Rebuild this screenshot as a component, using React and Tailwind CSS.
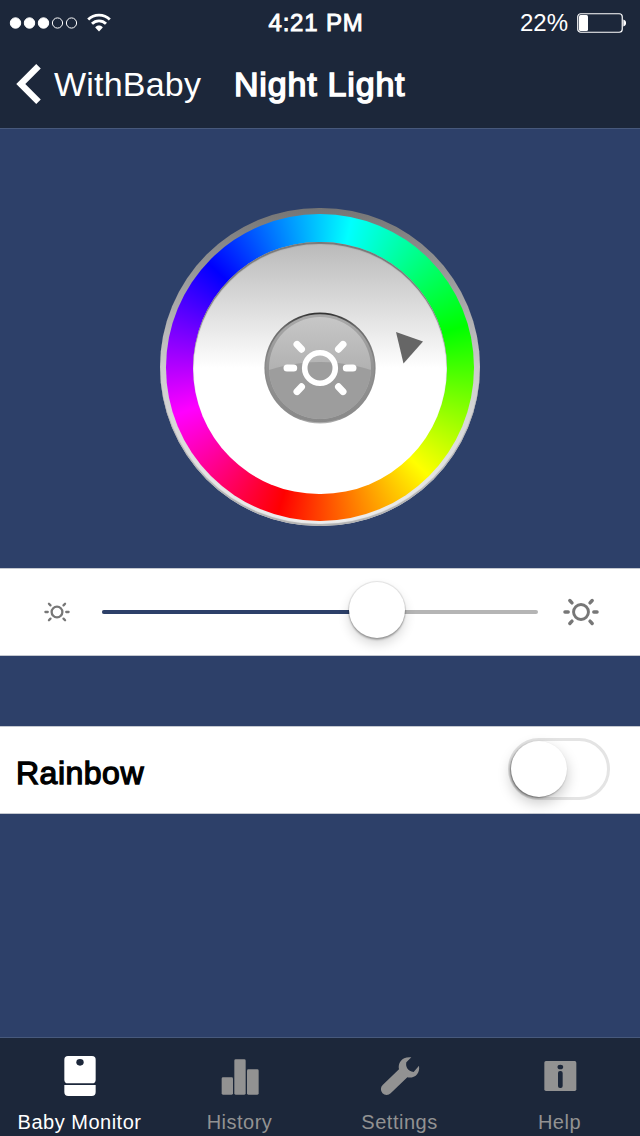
import { useState } from 'react';

const Sun = ({ size, ring = 5.6, ray = 7, className = '' }) => (
  <svg viewBox="-37 -37 74 74" width={size} height={size} className={className} fill="none" stroke="currentColor">
    <circle r="15.3" strokeWidth={ring} />
    <path
      d="M-33 0H-26.3M26.3 0H33M-23 -23.6L-18.5 -18.8M23 -23.6L18.5 -18.8M-23 23.6L-18.5 18.8M23 23.6L18.5 18.8"
      strokeWidth={ray}
      strokeLinecap="round"
    />
  </svg>
);

const StatusBar = () => (
  <div className="grid h-[45px] grid-cols-3 items-center pl-[9px] pr-[14px] text-[24px] leading-none">
    <div className="flex items-center gap-[9px]">
      <svg width="69" height="14" viewBox="0 0 69 14" fill="white" stroke="white">
        <circle cx="6.5" cy="7" r="5.2" />
        <circle cx="20.5" cy="7" r="5.2" />
        <circle cx="34.5" cy="7" r="5.2" />
        <circle cx="48.5" cy="7" r="5.1" fill="none" />
        <circle cx="62.5" cy="7" r="5.1" fill="none" />
      </svg>
      <svg width="24" height="19" viewBox="0 0 24 19" fill="none" stroke="white" strokeWidth="2.8">
        <path d="M1.2 6.4C7 .6 17 .6 22.8 6.4" />
        <path d="M5 10.8C8.8 6.8 15.2 6.8 19 10.8" />
        <path d="M8.2 14.4C10.2 11.8 13.8 11.8 15.8 14.4L12 18.6Z" fill="white" stroke="none" />
      </svg>
    </div>
    <span className="-ml-[3px] text-center tracking-[0.8px] [-webkit-text-stroke:0.9px_white]">4:21 PM</span>
    <div className="flex items-center justify-end gap-[9px]">
      <span>22%</span>
      <svg width="49" height="20" viewBox="0 0 49 20">
        <rect x="0.75" y="0.75" width="44.5" height="18.5" rx="3" fill="none" stroke="white" strokeWidth="1.2" />
        <rect x="2" y="2" width="9" height="16" rx="1.5" fill="white" />
        <path d="M46.3 6.5C50 7.5 50 12.5 46.3 13.5Z" fill="white" />
      </svg>
    </div>
  </div>
);

const Header = () => (
  <header className="h-[129px] border-b border-[#47597c] bg-[#1c273a] text-white">
    <StatusBar />
    <div className="flex h-[78px] items-center pl-4 text-[34px] leading-none">
      <svg width="25" height="40" viewBox="0 0 25 40" fill="none" stroke="white" strokeWidth="6.4">
        <path d="M22.5 2.3L4.8 20L22.5 37.7" />
      </svg>
      <span className="ml-[13px] w-[180px] tracking-[0.2px]">WithBaby</span>
      <h1 className="tracking-[0.8px] [-webkit-text-stroke:1.5px_white]">Night Light</h1>
    </div>
  </header>
);

const LightButton = () => (
  <button className="relative flex h-[112px] w-[112px] items-center justify-center rounded-full text-white">
    <svg className="absolute inset-0" width="112" height="112" viewBox="-56 -56 112 112">
      <defs>
        <linearGradient id="rim" x2="0" y2="1">
          <stop offset="0" stopColor="#303030" />
          <stop offset="0.12" stopColor="#686868" />
          <stop offset="0.45" stopColor="#8a8a8a" />
          <stop offset="0.94" stopColor="#8c8c8c" />
          <stop offset="1" stopColor="#b5b5b5" />
        </linearGradient>
        <linearGradient id="bevel" x2="0" y2="1">
          <stop offset="0" stopColor="#aaaaaa" />
          <stop offset="0.5" stopColor="#929292" />
          <stop offset="1" stopColor="#898989" />
        </linearGradient>
        <linearGradient id="gloss" x2="0" y2="1">
          <stop offset="0" stopColor="#c7c7c7" />
          <stop offset="0.5" stopColor="#b2b2b2" />
        </linearGradient>
        <clipPath id="face">
          <circle r="51" />
        </clipPath>
      </defs>
      <circle r="55.6" fill="url(#rim)" />
      <circle r="54" cy="0.3" fill="url(#bevel)" />
      <circle r="51" fill="url(#gloss)" />
      <ellipse cx="0" cy="42" rx="92" ry="48" fill="#9d9d9d" clipPath="url(#face)" />
    </svg>
    <Sun size={74} className="relative" />
  </button>
);

const ColorWheel = () => (
  <div className="relative flex h-[318px] w-[320px] items-center justify-center rounded-full bg-linear-to-b from-[#757575] via-[#cccccc] to-[#eeeeee] shadow-[inset_0_-2px_1px_#b0b0b0]">
    <div className="flex h-[307px] w-[308px] items-center justify-center rounded-full bg-[conic-gradient(from_12deg,#00ffff,#00ff00_62deg,#ffff00_123deg,#ff0000_184deg,#ff00ff_240deg,#0000ff_301deg,#00ffff)]">
      <div className="mt-[2px] flex h-[252px] w-[254px] items-center justify-center rounded-full bg-linear-to-b from-[#b9b9b9] to-white to-50% shadow-[inset_0_2px_1px_#777777]">
        <LightButton />
      </div>
    </div>
    {/* marker pointing at the selected colour */}
    <svg className="absolute left-[235px] top-[123px]" width="29" height="34" viewBox="0 0 29 34">
      <path d="M1 1L28 10.5L8.5 32.5Z" fill="#666666" />
    </svg>
  </div>
);

const BrightnessSlider = ({ value }) => (
  <div className="flex h-[88px] items-center border-y border-[#c4c8d0] bg-white text-[#777777]">
    <Sun size={26} ring={6.5} ray={6.5} className="mb-px ml-[44px]" />
    <div className="relative ml-8 h-1 w-[436px] rounded-full bg-[#b5b5b5]">
      <div className="h-1 rounded-full bg-[#2d4069]" style={{ width: `${value}%` }} />
      <div
        className="absolute -top-[28px] -ml-7 h-14 w-14 rounded-full bg-white shadow-[0_0_1px_1px_rgba(0,0,0,0.1),0_2px_2px_rgba(0,0,0,0.25),0_6px_12px_rgba(0,0,0,0.16)]"
        style={{ left: `${value}%` }}
      />
    </div>
    <Sun size={36} ring={6} ray={7} className="mb-px ml-[25px]" />
  </div>
);

const RainbowRow = ({ on, onToggle }) => (
  <div className="flex h-[88px] items-center justify-between border-y border-[#c4c8d0] bg-white pl-4 pr-[30px]">
    <span className="pt-[5px] text-[32px] leading-none tracking-[0.5px] text-black [-webkit-text-stroke:1.3px_black]">
      Rainbow
    </span>
    <button
      role="switch"
      aria-checked={on}
      aria-label="Rainbow"
      onClick={onToggle}
      className={`mb-[2px] flex h-[62px] w-[102px] items-center rounded-full border-[3px] border-[#e4e4e4] ${on ? 'justify-end bg-[#4cd964]' : 'bg-white'}`}
    >
      <span className="h-14 w-14 rounded-full bg-white shadow-[-1px_1px_2px_rgba(0,0,0,0.45),0_6px_14px_rgba(0,0,0,0.22)]" />
    </button>
  </div>
);

const tabs = [
  {
    label: 'Baby Monitor',
    active: true,
    icon: (
      <>
        <rect x="25" y="6" width="94" height="82" rx="11" />
        <path d="M25 93H119V114Q119 126 107 126H37Q25 126 25 114Z" />
        <ellipse cx="72" cy="25" rx="11" ry="10" fill="#1c273a" />
      </>
    ),
  },
  {
    label: 'History',
    icon: (
      <>
        <rect x="17" y="70" width="34" height="52" rx="4" />
        <rect x="55" y="16" width="34" height="106" rx="4" />
        <rect x="93" y="46" width="35" height="76" rx="4" />
      </>
    ),
  },
  {
    label: 'Settings',
    icon: <path d="M20 93L69 46C65 28 77 7 106 10L91 25C88 38 95 52 113 54L129 35C133 61 114 74 94 70L44 118A17 17 0 0 1 20 93Z" />,
  },
  {
    label: 'Help',
    icon: (
      <>
        <rect x="25" y="21" width="96" height="90" rx="5" />
        <ellipse cx="73" cy="39" rx="8.5" ry="7" fill="#1c273a" />
        <rect x="66" y="51" width="14" height="51" rx="6" fill="#1c273a" />
      </>
    ),
  },
];

const TabBar = () => (
  <nav className="grid h-[99px] grid-cols-4 border-t border-[#47597c] bg-[#1c273a]">
    {tabs.map((tab) => (
      <div
        key={tab.label}
        className={`flex flex-col items-center pt-4 ${tab.active ? 'text-white' : 'text-[#929292]'}`}
      >
        <svg width="48" height="44" viewBox="0 0 144 132" fill="currentColor">
          {tab.icon}
        </svg>
        <span className="mr-px mt-3 text-[20px] leading-6 tracking-[0.5px]">{tab.label}</span>
      </div>
    ))}
  </nav>
);

const App = () => {
  const [rainbow, setRainbow] = useState(false);

  return (
    <div className="flex h-[1136px] w-[640px] flex-col overflow-hidden bg-[#2d4069] font-['Liberation_Sans',Arial,sans-serif]">
      <Header />
      <main className="flex-1">
        <div className="flex h-[439px] justify-center pt-[79px]">
          <ColorWheel />
        </div>
        <BrightnessSlider value={63} />
        <div className="mt-[70px]">
          <RainbowRow on={rainbow} onToggle={() => setRainbow(!rainbow)} />
        </div>
      </main>
      <TabBar />
    </div>
  );
};

export default App;
